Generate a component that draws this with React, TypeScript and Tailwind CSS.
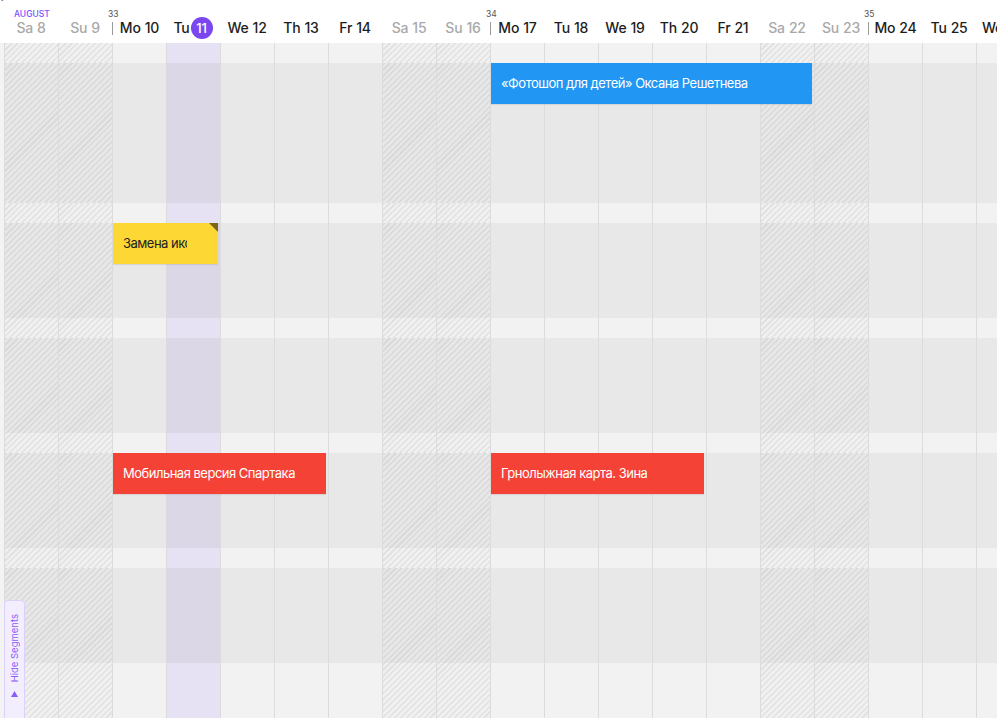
import React from 'react';

type Day = { label: string; n: number; weekend?: boolean; today?: boolean; week?: number; month?: string };

const days: Day[] = [
  { label: 'Sa', n: 8, weekend: true, month: 'August' },
  { label: 'Su', n: 9, weekend: true },
  { label: 'Mo', n: 10, week: 33 },
  { label: 'Tu', n: 11, today: true },
  { label: 'We', n: 12 },
  { label: 'Th', n: 13 },
  { label: 'Fr', n: 14 },
  { label: 'Sa', n: 15, weekend: true },
  { label: 'Su', n: 16, weekend: true },
  { label: 'Mo', n: 17, week: 34 },
  { label: 'Tu', n: 18 },
  { label: 'We', n: 19 },
  { label: 'Th', n: 20 },
  { label: 'Fr', n: 21 },
  { label: 'Sa', n: 22, weekend: true },
  { label: 'Su', n: 23, weekend: true },
  { label: 'Mo', n: 24, week: 35 },
  { label: 'Tu', n: 25 },
  { label: 'We', n: 26 },
];

type EventItem = { title: string; place: string; color: 'blue' | 'red' | 'yellow'; corner?: boolean };

type Band = { kind: 'gap' | 'lane'; height: string; events?: EventItem[] };

const bands: Band[] = [
  { kind: 'gap', height: 'h-[20px]' },
  {
    kind: 'lane',
    height: 'h-[140px]',
    events: [{ title: '«Фотошоп для детей» Оксана Решетнева', place: 'col-start-11 col-span-6', color: 'blue' }],
  },
  { kind: 'gap', height: 'h-[20px]' },
  {
    kind: 'lane',
    height: 'h-[95px]',
    events: [{ title: 'Замена иконок', place: 'col-start-4 col-span-2', color: 'yellow', corner: true }],
  },
  { kind: 'gap', height: 'h-[20px]' },
  { kind: 'lane', height: 'h-[95px]' },
  { kind: 'gap', height: 'h-[20px]' },
  {
    kind: 'lane',
    height: 'h-[95px]',
    events: [
      { title: 'Мобильная версия Спартака', place: 'col-start-4 col-span-4', color: 'red' },
      { title: 'Грнолыжная карта. Зина', place: 'col-start-11 col-span-4', color: 'red' },
    ],
  },
  { kind: 'gap', height: 'h-[20px]' },
  { kind: 'lane', height: 'h-[95px]' },
  { kind: 'gap', height: 'h-[60px]' },
];

const hatch =
  'bg-[image:repeating-linear-gradient(135deg,rgba(0,0,0,0.06)_0_1.5px,transparent_1.5px_4.2px)]';

function cellClass(kind: Band['kind'], day: Day) {
  if (day.weekend) {
    return kind === 'gap' ? `bg-[#f0f0f0] ${hatch}` : `bg-[#e7e7e7] ${hatch}`;
  }
  if (day.today) {
    return kind === 'gap' ? 'bg-[#e6e1f3]' : 'bg-[#dcd7e7]';
  }
  return kind === 'gap' ? 'bg-[#f2f2f2]' : 'bg-[#e8e8e8]';
}

const eventColors = {
  blue: 'bg-[#2196f3] text-white',
  red: 'bg-[#f44336] text-white',
  yellow: 'bg-[#fdd835] text-[#222222]',
};

function HeaderCell({ day }: { day: Day }) {
  const muted = day.weekend;
  return (
    <div className="w-[54px] shrink-0 flex flex-col">
      <div className="h-[14px] pt-[6px] text-[8.5px] leading-[9px] whitespace-nowrap">
        {day.month && <span className="pl-[10px] uppercase font-medium text-[#7c4dff]">{day.month}</span>}
        {day.week && <span className="-ml-[4px] text-[#555555]">{day.week}</span>}
      </div>
      <div className="h-[20px] flex items-center">
        {day.week && <div className="w-px h-[13px] bg-[#9a9a9a]" />}
        <div
          className={`flex-1 flex items-center justify-center gap-[1px] text-[14px] leading-[20px] font-medium tracking-[-0.2px] whitespace-nowrap ${
            muted ? 'text-[#a9a9a9]' : 'text-[#1d1d1d]'
          }`}
        >
          <span>{day.label}</span>
          {day.today ? (
            <span className="w-[22px] h-[22px] rounded-full bg-[#7b46f0] text-white text-[13px] tracking-normal flex items-center justify-center">
              {day.n}
            </span>
          ) : (
            <span className="ml-[3px]">{day.n}</span>
          )}
        </div>
      </div>
    </div>
  );
}

function EventBar({ ev }: { ev: EventItem }) {
  return (
    <div
      className={`${ev.place} row-start-1 relative ml-[1px] mr-[2px] h-[41px] flex items-center pl-[10px] text-[13px] tracking-[-0.5px] shadow-[0_1px_1px_rgba(0,0,0,0.08)] ${
        eventColors[ev.color]
      } ${ev.corner ? 'pr-[31px]' : 'pr-[8px]'}`}
    >
      <span className="overflow-hidden whitespace-nowrap pt-[1px]">{ev.title}</span>
      {ev.corner && (
        <svg className="absolute top-0 right-0" width="9" height="9" viewBox="0 0 9 9">
          <polygon points="0,0 9,0 9,9" fill="#7d6518" />
        </svg>
      )}
    </div>
  );
}

function BandRow({ band }: { band: Band }) {
  return (
    <div className={`grid ${band.height}`}>
      <div className="[grid-area:1/1] flex">
        <div className="w-[4px] shrink-0 bg-[#f3f3f3]" />
        {days.map((d) => (
          <div
            key={d.n}
            className={`w-[54px] shrink-0 border-l border-[#dcdcdc] ${cellClass(band.kind, d)}`}
          />
        ))}
      </div>
      {band.events && (
        <div className="[grid-area:1/1] grid grid-cols-[4px_repeat(19,54px)] items-start">
          {band.events.map((ev) => (
            <EventBar key={ev.title} ev={ev} />
          ))}
        </div>
      )}
    </div>
  );
}

export default function App() {
  return (
    <div className="relative w-[997px] h-[718px] overflow-hidden bg-white font-['Inter','Noto_Sans',sans-serif]">
      {/* page title, scrolled mostly out of view */}
      <div className="h-[4px] overflow-hidden flex items-end">
        <div className="flex items-center text-[17px] leading-[22px] text-[#9a9a9a] whitespace-nowrap">
          <span className="text-[#444444] pl-[1px]">/</span>
          <span className="ml-[12px] w-[11px] h-[14px] rounded-[2px] bg-[#6b6b6b]" />
          <span className="ml-[16px]">Timeline</span>
        </div>
      </div>

      {/* day header */}
      <div className="flex h-[39px] bg-white">
        <div className="w-[4px] shrink-0" />
        {days.map((d) => (
          <HeaderCell key={d.n} day={d} />
        ))}
      </div>

      {bands.map((b, i) => (
        <BandRow key={i} band={b} />
      ))}

      {/* segments toggle */}
      <div className="absolute left-[4px] top-[600px] w-[21px] h-[130px] rounded-t-[4px] border border-[#ddd0fb] bg-[#f3eefe] flex flex-col items-center pt-[13px] gap-[9px]">
        <span className="[writing-mode:vertical-rl] rotate-180 text-[9.5px] leading-[11px] text-[#8b5cf6] whitespace-nowrap">
          Hide Segments
        </span>
        <svg width="7" height="6" viewBox="0 0 7 6">
          <polygon points="3.5,0 7,6 0,6" fill="#8b5cf6" />
        </svg>
      </div>
    </div>
  );
}
